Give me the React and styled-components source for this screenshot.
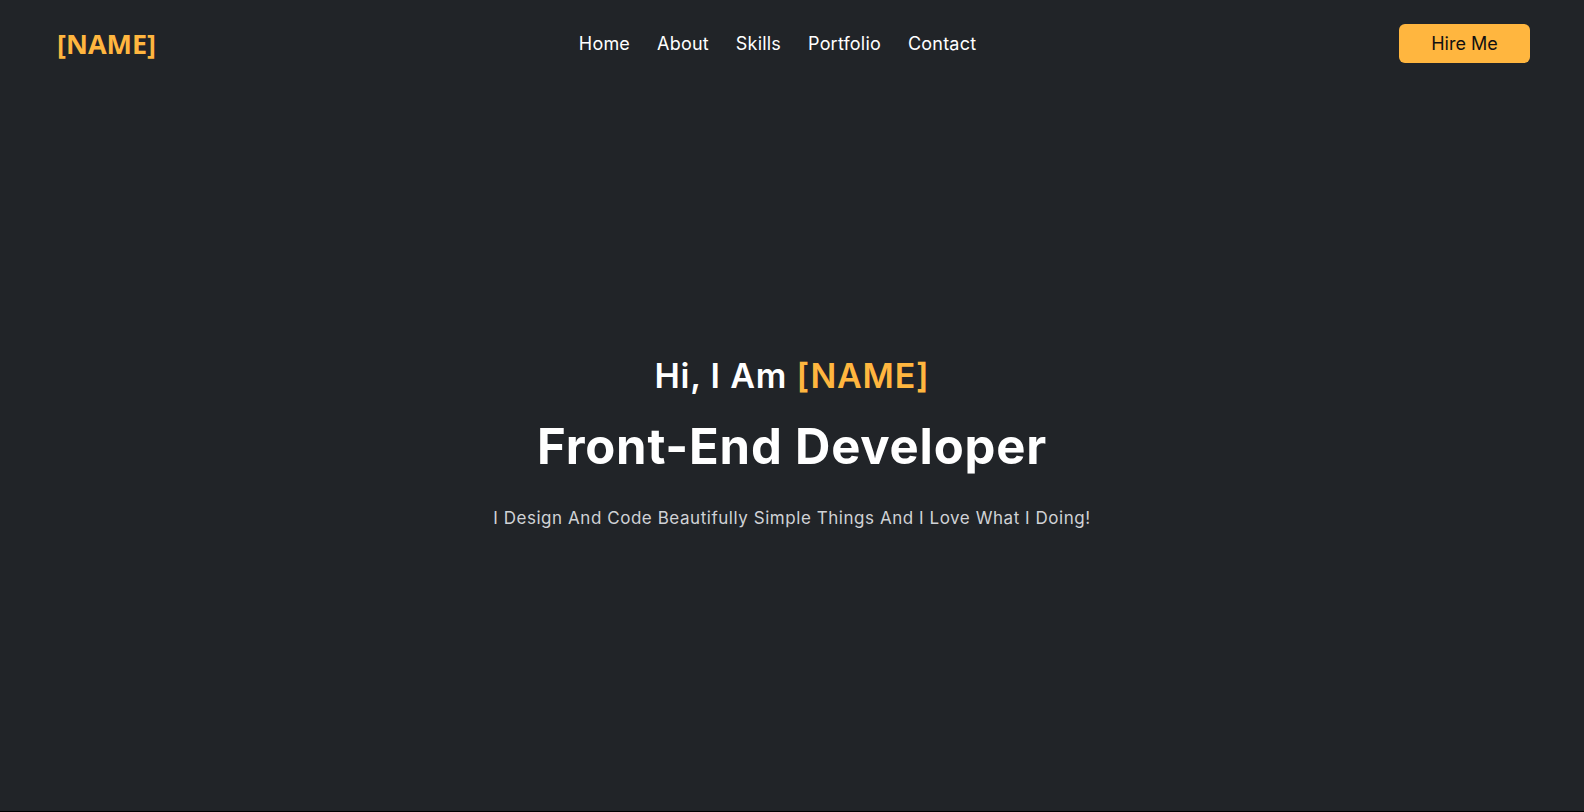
import React from "react";
import styled, { createGlobalStyle } from "styled-components";

const Global = createGlobalStyle`
  html, body { margin: 0; padding: 0; background: #000; }
  body { font-family: "Open Sans", "Noto Sans", sans-serif; }
  * { box-sizing: border-box; }
`;

const Page = styled.div`
  background: #212428;
  height: 811px;
  display: flex;
  flex-direction: column;
`;

const Header = styled.header`
  height: 87px;
  padding: 0 54px 0 57px;
  display: flex;
  justify-content: space-between;
  align-items: center;
`;

const Logo = styled.a`
  font-family: "Open Sans", sans-serif;
  font-weight: 700;
  font-size: 27px;
  color: #ffb63f;
  text-decoration: none;
`;

const Nav = styled.nav`
  display: flex;
  gap: 27px;
`;

const NavLink = styled.a`
  font-family: "Inter", sans-serif;
  font-size: 18px;
  letter-spacing: 0.2px;
  color: #ffffff;
  text-decoration: none;
`;

const HireButton = styled.button`
  width: 131px;
  height: 39px;
  border: none;
  border-radius: 6px;
  background: #ffb63f;
  color: #111;
  font-family: "Inter", sans-serif;
  font-size: 18px;
  cursor: pointer;
`;

const Hero = styled.section`
  flex: 1;
  display: flex;
  flex-direction: column;
  align-items: center;
  justify-content: center;
  padding-bottom: 15px;
  text-align: center;
`;

const Greeting = styled.h3`
  margin: 0;
  font-family: "Inter", sans-serif;
  font-weight: 600;
  font-size: 34px;
  letter-spacing: 0.8px;
  color: #fff;
`;

const Accent = styled.span`
  color: #ffb63f;
`;

const Title = styled.h1`
  margin: 21px 0 0;
  font-family: "Inter", sans-serif;
  font-weight: 700;
  font-size: 49px;
  letter-spacing: 0.8px;
  color: #fff;
`;

const Subtitle = styled.p`
  margin: 32px 0 0;
  font-family: "Inter", sans-serif;
  font-size: 17px;
  letter-spacing: 0.55px;
  color: #d0d2d6;
`;

export default function App() {
  return (
    <>
      <Global />
      <Page>
        <Header>
          <Logo href="#">[NAME]</Logo>
          <Nav>
            <NavLink href="#">Home</NavLink>
            <NavLink href="#">About</NavLink>
            <NavLink href="#">Skills</NavLink>
            <NavLink href="#">Portfolio</NavLink>
            <NavLink href="#">Contact</NavLink>
          </Nav>
          <HireButton>Hire Me</HireButton>
        </Header>
        <Hero>
          <Greeting>
            Hi, I Am <Accent>[NAME]</Accent>
          </Greeting>
          <Title>Front-End Developer</Title>
          <Subtitle>I Design And Code Beautifully Simple Things And I Love What I Doing!</Subtitle>
        </Hero>
      </Page>
    </>
  );
}
